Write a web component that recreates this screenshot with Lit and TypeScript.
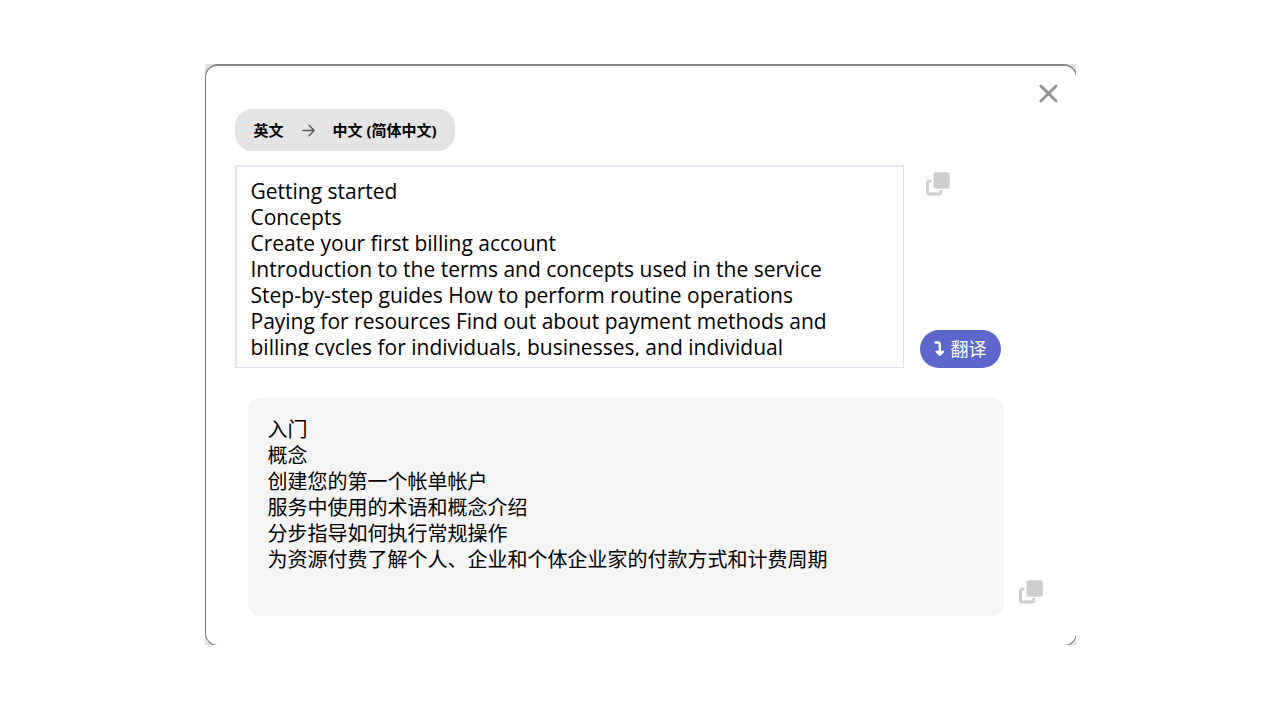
import { LitElement, html, css, svg } from "lit";
import { customElement, state } from "lit/decorators.js";

const SOURCE = `Getting started
Concepts
Create your first billing account
Introduction to the terms and concepts used in the service
Step-by-step guides How to perform routine operations
Paying for resources Find out about payment methods and billing cycles for individuals, businesses, and individual`;

const RESULT = [
  "入门",
  "概念",
  "创建您的第一个帐单帐户",
  "服务中使用的术语和概念介绍",
  "分步指导如何执行常规操作",
  "为资源付费了解个人、企业和个体企业家的付款方式和计费周期",
];

const copyIcon = html`<svg class="icon" width="24" height="24" viewBox="0 0 24 24" aria-hidden="true">
  ${svg`<path d="M5.5 9.3H3.2Q1.5 9.3 1.5 11V20.3Q1.5 22 3.2 22H13Q14.7 22 14.7 20.3V18" fill="none" stroke="#cecece" stroke-width="3"/>
  <rect x="7.4" y="0.3" width="16.4" height="16.4" rx="2.4" fill="#cecece"/>`}
</svg>`;

@customElement("app-root")
export class AppRoot extends LitElement {
  @state() private source = SOURCE;

  static styles = css`
    :host {
      display: block;
      padding: 64px 32px;
      color: #000;
      font-family: "Open Sans", "Noto Sans CJK SC", sans-serif;
    }
    .frame {
      max-width: 871px;
      margin: 0 auto;
      overflow: hidden;
      background: #e4e4e4;
    }
    .dialog {
      box-sizing: border-box;
      margin: 0 -1px -1px 0;
      padding: 0 18px 29px 29px;
      border: 1px solid #777;
      border-top: 2px solid #8a8a8a;
      border-radius: 13px;
      background: #fff;
    }
    button {
      display: flex;
      align-items: center;
      justify-content: center;
      margin: 0;
      padding: 0;
      border: 0;
      background: none;
      color: inherit;
      font: inherit;
      cursor: pointer;
    }
    .icon {
      display: block;
      flex: none;
    }
    .header {
      display: flex;
      align-items: flex-end;
      justify-content: space-between;
      height: 85px;
    }
    .languages {
      display: flex;
      align-items: center;
      gap: 18px;
      height: 42px;
      padding: 0 18px 0 19px;
      border-radius: 17px;
      background: #e4e4e4;
      font-size: 15px;
      font-weight: 700;
      line-height: 20px;
      white-space: nowrap;
    }
    .close {
      align-self: flex-start;
      margin-top: 18px;
    }
    .source {
      display: flex;
      gap: 16px;
      margin-top: 14px;
      padding-right: 57px;
    }
    .field {
      flex: 1;
      min-width: 0;
      padding: 11px 14px 11px;
      border: 1px solid #dddfee;
      border-top: 2px solid #e2e5f2;
      border-left: 2px solid #e2e5f2;
    }
    .input {
      display: block;
      box-sizing: border-box;
      width: 100%;
      height: 178px;
      margin: 0;
      padding: 0;
      border: 0;
      outline: 0;
      resize: none;
      overflow: hidden;
      background: none;
      color: inherit;
      font-family: inherit;
      font-size: 21px;
      line-height: 26px;
    }
    .side {
      display: flex;
      flex-direction: column;
      align-items: flex-start;
      justify-content: space-between;
      padding-top: 7px;
    }
    .side .copy {
      margin-left: 6px;
    }
    .translate {
      gap: 6px;
      width: 81px;
      height: 38px;
      border-radius: 19px;
      background: #5b67ca;
      color: #fff;
      font-size: 18px;
      line-height: 26px;
    }
    .target {
      display: flex;
      align-items: flex-end;
      gap: 15px;
      margin-top: 30px;
      padding: 0 15px 0 13px;
    }
    .result {
      flex: 1;
      min-width: 0;
      min-height: 179px;
      padding: 19px 20px 20px;
      border-radius: 12px;
      background: #f5f5f5;
      font-size: 20px;
      line-height: 26px;
    }
    .line {
      margin: 0;
    }
    .target .copy {
      margin-bottom: 12px;
    }
  `;

  private onInput(e: Event) {
    this.source = (e.target as HTMLTextAreaElement).value;
  }

  render() {
    return html`
      <div class="frame">
        <main class="dialog" role="dialog" aria-label="翻译">
          <header class="header">
            <div class="languages">
              <span>英文</span>
              <svg class="icon" width="13" height="13" viewBox="0 0 13 13" fill="none" stroke="#555" stroke-width="1.3" stroke-linecap="round" stroke-linejoin="round" aria-hidden="true">
                <path d="M0.8 6.5H12M7 1.3L12.2 6.5L7 11.7" />
              </svg>
              <span>中文 (简体中文)</span>
            </div>
            <button class="close" aria-label="关闭">
              <svg class="icon" width="19" height="19" viewBox="0 0 19 19" fill="none" stroke="#929292" stroke-width="2.8" stroke-linecap="round" aria-hidden="true">
                <path d="M1.9 1.9L17.1 17.1M17.1 1.9L1.9 17.1" />
              </svg>
            </button>
          </header>
          <section class="source">
            <div class="field">
              <textarea class="input" aria-label="英文" spellcheck="false" .value=${this.source} @input=${this.onInput}></textarea>
            </div>
            <div class="side">
              <button class="copy" aria-label="复制">${copyIcon}</button>
              <button class="translate">
                <svg class="icon" width="11" height="16" viewBox="0 0 11 16" aria-hidden="true">
                  <path d="M0.6 1.5H3.8Q5.8 1.5 5.8 3.5V12" fill="none" stroke="#fff" stroke-width="2.3" />
                  <path d="M2.2 10.6L5.8 14.2L9.4 10.6Z" fill="#fff" stroke="#fff" stroke-width="1.6" stroke-linejoin="round" />
                </svg>
                <span>翻译</span>
              </button>
            </div>
          </section>
          <section class="target">
            <div class="result">${RESULT.map((t) => html`<p class="line">${t}</p>`)}</div>
            <button class="copy" aria-label="复制">${copyIcon}</button>
          </section>
        </main>
      </div>
    `;
  }
}
